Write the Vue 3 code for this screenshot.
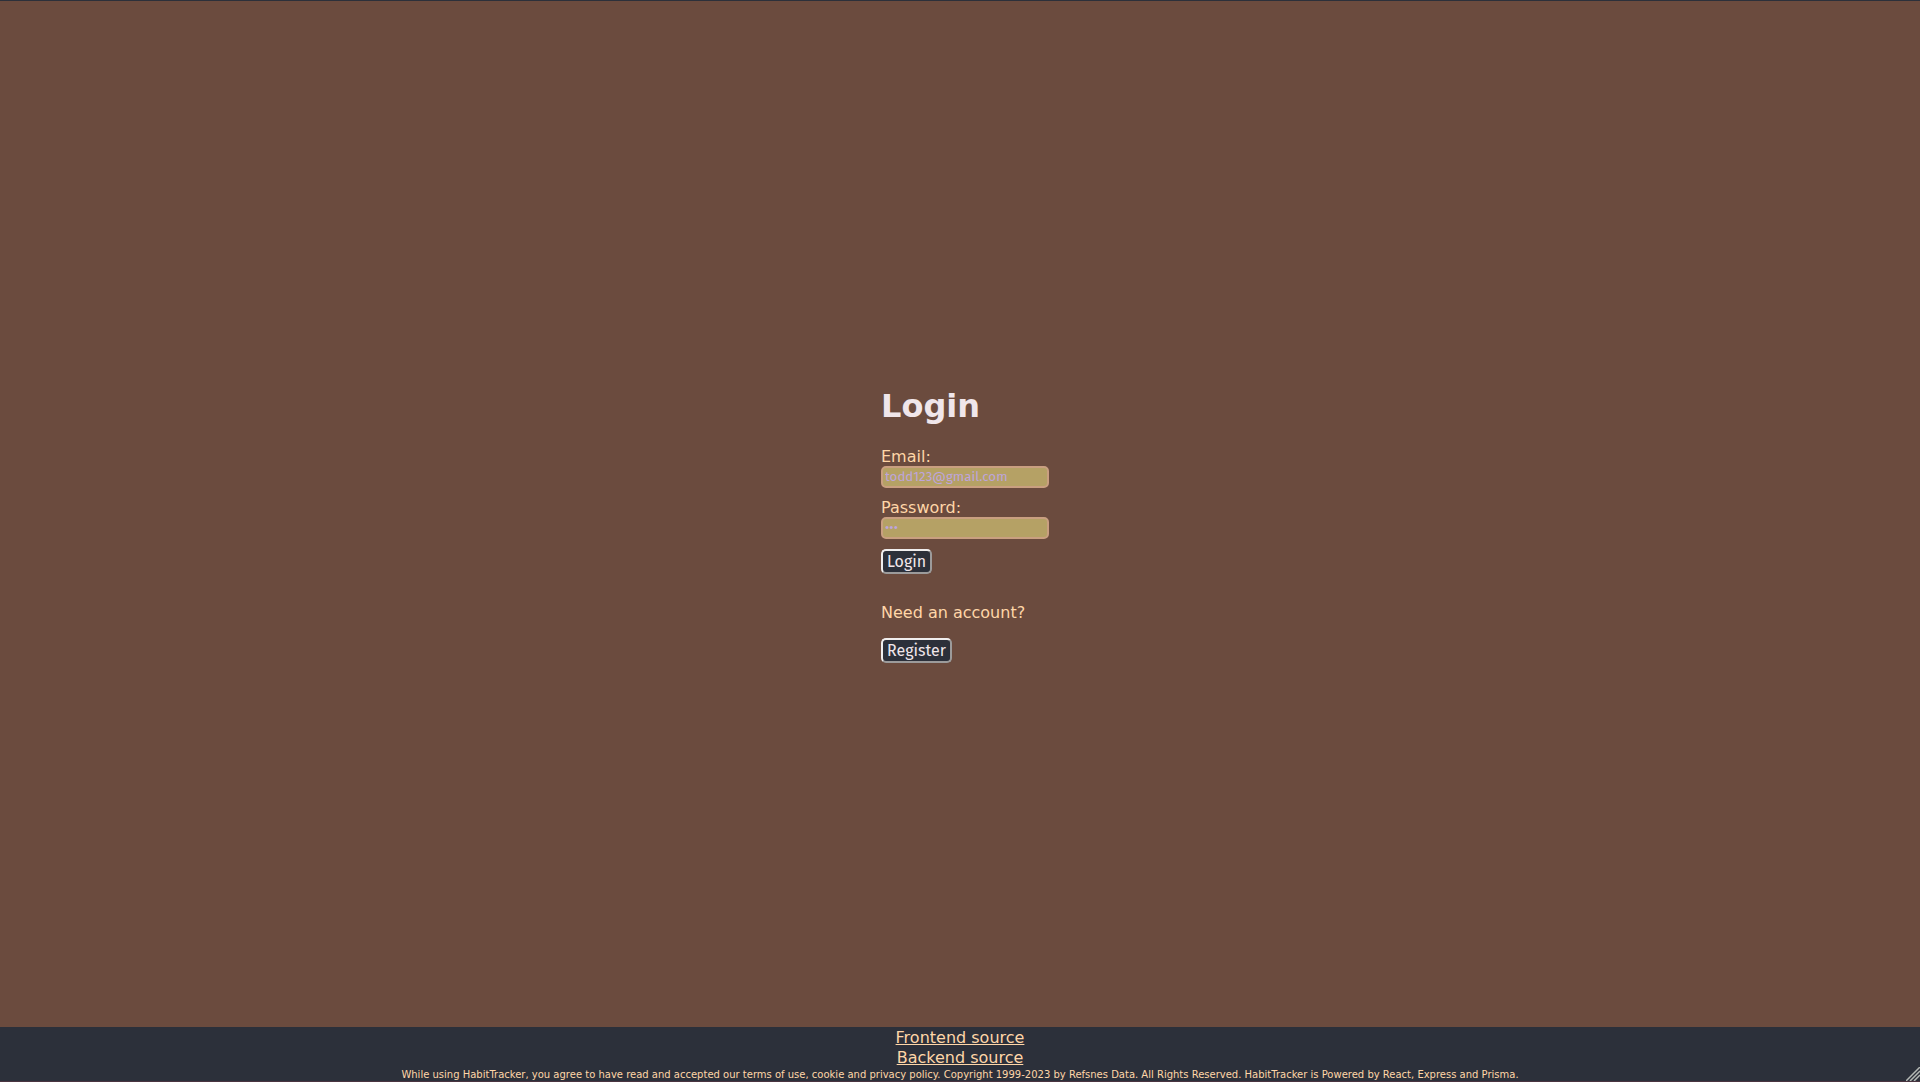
<script setup>
import { ref } from 'vue'

const email = ref('')
const password = ref('')
</script>

<template>
  <div class="page">
    <main>
      <div class="panel">
        <form @submit.prevent>
          <h1>Login</h1>
          <label for="email">Email:</label>
          <input id="email" v-model="email" type="email" placeholder="todd123@gmail.com">
          <label for="password">Password:</label>
          <input id="password" v-model="password" type="password" placeholder="•••">
          <button type="submit">Login</button>
        </form>
        <p>Need an account?</p>
        <button type="button">Register</button>
      </div>
    </main>
    <footer>
      <a href="#frontend">Frontend source</a>
      <a href="#backend">Backend source</a>
      <small>While using HabitTracker, you agree to have read and accepted our terms of use, cookie and privacy policy. Copyright 1999-2023 by Refsnes Data. All Rights Reserved. HabitTracker is Powered by React, Express and Prisma.</small>
      <svg class="grip" viewBox="0 0 14 14" aria-hidden="true">
        <path d="M0 14L14 0M4 14L14 4M8 14L14 8" fill="none" stroke="#b4b8b4" stroke-width="1.5" />
      </svg>
    </footer>
  </div>
</template>

<style>
body {
  margin: 0;
}
</style>

<style scoped>
.page {
  box-sizing: border-box;
  min-height: 100vh;
  display: flex;
  flex-direction: column;
  border-top: 1px solid #2c303a;
  background: #6b4b3e;
  color: #ffd6a8;
  font-family: "DejaVu Sans", sans-serif;
  font-size: 16px;
  line-height: 19px;
}
main {
  flex: 1;
  display: flex;
  align-items: center;
  justify-content: center;
}
.panel {
  width: 158px;
}
form {
  display: flex;
  flex-direction: column;
  align-items: flex-start;
}
h1 {
  margin: 22px 0;
  color: #f0e6ea;
  font-size: 32px;
  line-height: 38px;
}
input {
  box-sizing: border-box;
  width: 168px;
  height: 22px;
  margin: 0 0 10px;
  padding: 0 2px;
  border: 2px solid #c99f80;
  border-radius: 5px;
  background: #b5a165;
  color: #2c303a;
  font-family: "Fira Sans", "Open Sans", sans-serif;
}
input::placeholder {
  color: #bda5dc;
}
button {
  box-sizing: border-box;
  height: 25px;
  padding: 0 4px;
  border: 2px outset #f0eeee;
  border-radius: 5px;
  background: #2c303a;
  color: #f0e6ea;
  font-family: "Fira Sans", "Open Sans", sans-serif;
  font-size: 16px;
  line-height: 20px;
}
p {
  margin: 29px 0 16px;
}
footer {
  position: relative;
  display: flex;
  flex-direction: column;
  align-items: center;
  padding-top: 1px;
  border-bottom: 1px solid #4a3540;
  background: #2c303a;
}
a {
  color: inherit;
  line-height: 20px;
}
small {
  font-size: 10px;
  line-height: 13px;
}
.grip {
  position: absolute;
  right: 0;
  bottom: 0;
  width: 14px;
  height: 14px;
}
</style>
